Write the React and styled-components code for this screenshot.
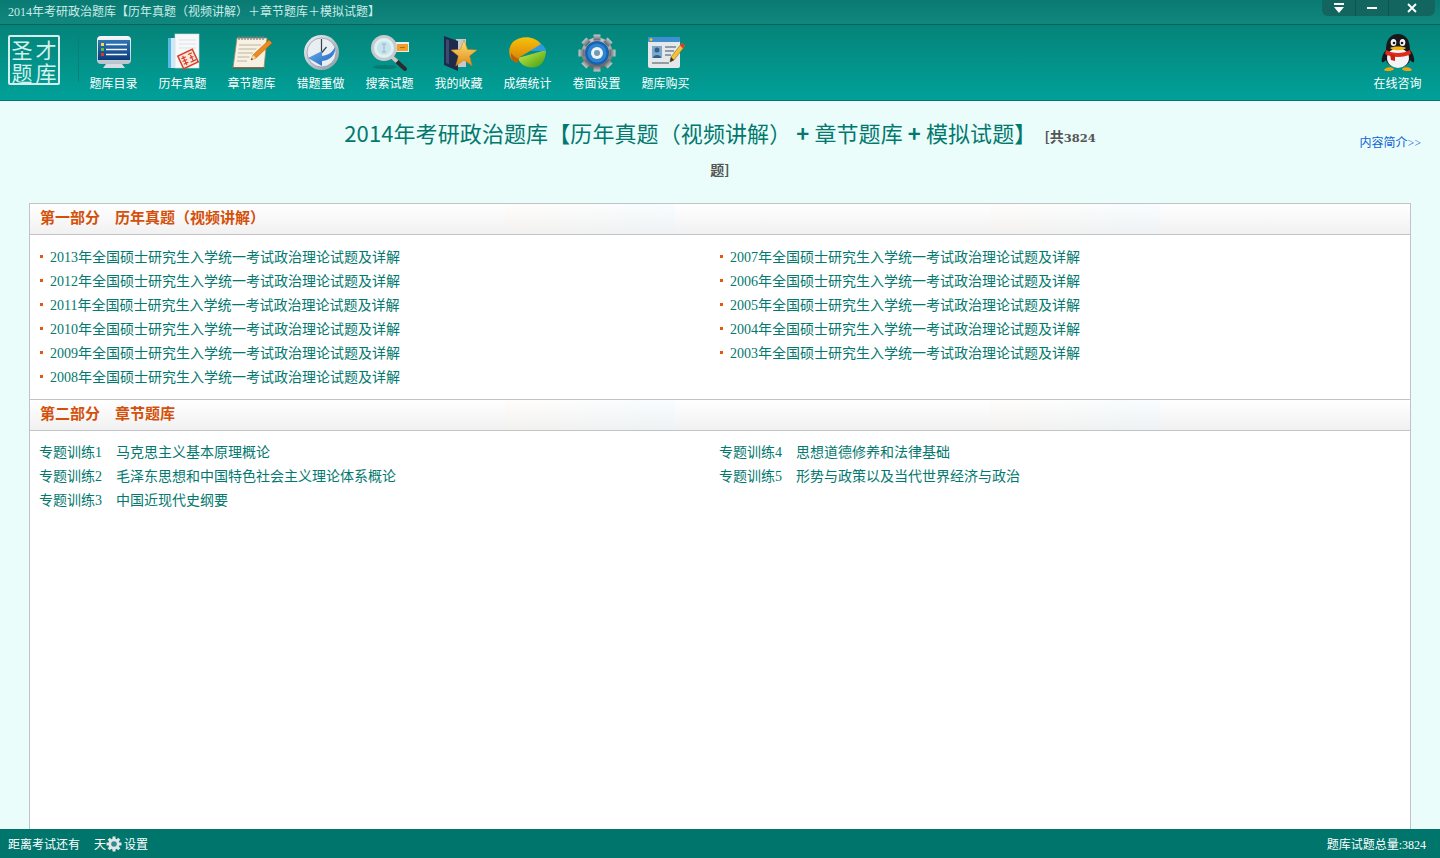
import React from 'react';
import styled, { createGlobalStyle } from 'styled-components';

const FONT = '"Liberation Serif", "Noto Sans CJK SC", sans-serif';

const GlobalStyle = createGlobalStyle`
  html, body {
    margin: 0;
    padding: 0;
    background: #ebfdfb;
    font-family: ${FONT};
  }
`;

const Page = styled.div`
  height: 100vh;
  display: flex;
  flex-direction: column;
  overflow: hidden;
`;

const TitleBar = styled.div`
  height: 24px;
  flex: none;
  display: flex;
  align-items: flex-start;
  justify-content: space-between;
  padding: 0 5px 0 8px;
  background: linear-gradient(#0a7a72, #10877e);
  border-bottom: 1px solid #05635c;
`;

const WindowTitle = styled.span`
  font-size: 12px;
  line-height: 24px;
  color: #c9ece8;
`;

const WindowControls = styled.div`
  display: flex;
  height: 16px;
  background: #12665f;
  border-radius: 0 0 6px 6px;
`;

const WindowButton = styled.button`
  width: ${(p) => p.$w}px;
  height: 16px;
  padding: 0;
  border: 0;
  border-left: ${(p) => (p.$first ? '0' : '1px solid #0c5650')};
  background: transparent;
  display: flex;
  align-items: center;
  justify-content: center;
`;

const Toolbar = styled.div`
  height: 75px;
  flex: none;
  display: flex;
  background: linear-gradient(#058379, #00a199);
  border-bottom: 1px solid #04776f;
`;

const Logo = styled.div`
  flex: none;
  width: 48px;
  height: 46px;
  margin: 10px 0 0 8px;
  border: 2px solid #d5f0ec;
  border-radius: 2px;
  display: grid;
  grid-template-columns: 1fr 1fr;
  grid-template-rows: 1fr 1fr;
  place-items: center;
  font-family: "Noto Sans CJK SC", sans-serif;
  font-size: 21px;
  color: #d5f0ec;
`;

const LogoChar = styled.span`
  display: block;
  height: 22px;
  line-height: 22px;
`;

const Separator = styled.div`
  flex: none;
  width: 1px;
  height: 46px;
  margin: 11px 0 0 18px;
  background: #068178;
`;

const ToolItem = styled.div`
  flex: none;
  width: 69px;
  display: flex;
  flex-direction: column;
  align-items: center;
  padding-top: 8px;
  margin-left: ${(p) => (p.$push ? 'auto' : '0')};
  margin-right: ${(p) => (p.$push ? '8px' : '0')};
  svg {
    display: block;
  }
`;

const ToolLabel = styled.span`
  font-family: "Noto Sans CJK SC", sans-serif;
  font-size: 12px;
  line-height: 20px;
  color: #fff;
  white-space: nowrap;
`;

const Main = styled.div`
  flex: 1;
  min-height: 0;
  display: flex;
  flex-direction: column;
  padding: 15px 29px 0;
`;

const Heading = styled.div`
  flex: none;
  display: grid;
  grid-template-columns: 311px 760px 1fr;
  margin-bottom: 21px;
`;

const HeadingText = styled.h1`
  grid-column: 2;
  margin: 0;
  text-align: center;
  font-family: "Noto Sans CJK SC", sans-serif;
  font-weight: 400;
  font-size: 22px;
  line-height: 33px;
  letter-spacing: 0.1px;
  color: #03786e;
`;

const Plus = styled.span`
  margin: 0 5px;
  font-weight: 700;
`;

const Total = styled.span`
  font-size: 14px;
  line-height: 14px;
  font-weight: 700;
  letter-spacing: 0;
  color: #555;
  margin-left: 8px;
`;

const TotalDigits = styled.span`
  font-family: "DejaVu Serif", serif;
  font-size: 11.5px;
`;

const IntroLink = styled.a`
  grid-column: 3;
  justify-self: end;
  margin: 17px -10px 0 0;
  font-size: 12px;
  line-height: 20px;
  color: #0b62d6;
`;

const Panel = styled.div`
  flex: 1;
  background: #fff;
  border: 1px solid #c0c4c6;
  border-bottom: 0;
`;

const SectionHeader = styled.h2`
  height: 30px;
  margin: 0;
  padding-left: 10px;
  font-size: 15px;
  font-weight: 700;
  line-height: 29px;
  color: #d4500a;
  background:
    linear-gradient(90deg, rgba(255, 242, 225, 0.12), rgba(225, 245, 255, 0.22)) 475px 0 / 170px 100% no-repeat,
    linear-gradient(90deg, rgba(255, 242, 225, 0.12), rgba(225, 245, 255, 0.22)) 960px 0 / 170px 100% no-repeat,
    linear-gradient(#fff, #f1f1f1);
  border-top: ${(p) => (p.$divided ? '1px solid #c0c4c6' : '0')};
  border-bottom: 1px solid #c0c4c6;
  white-space: pre;
`;

const Columns = styled.div`
  display: grid;
  grid-template-columns: 680px 680px;
  padding: ${(p) => (p.$tight ? '8px' : '9px')} 0 11px 10px;
`;

const Column = styled.ul`
  margin: 0;
  padding: 0;
  list-style: none;
`;

const PaperRow = styled.li`
  display: flex;
  align-items: center;
  height: 24px;
  font-size: 14px;
  color: #03786e;
  white-space: nowrap;
  &::before {
    content: '';
    width: 3px;
    height: 3px;
    margin-right: 7px;
    background: #e0590f;
  }
`;

const ChapterRow = styled.li`
  display: flex;
  align-items: center;
  gap: 14px;
  height: 24px;
  margin-left: -1px;
  font-size: 14px;
  color: #03786e;
  white-space: nowrap;
`;

const StatusBar = styled.div`
  height: 29px;
  flex: none;
  display: flex;
  align-items: center;
  padding: 0 14px 0 8px;
  background: #00756c;
  color: #fff;
  font-size: 12px;
`;

const StatusDays = styled.span`
  margin-left: 14px;
`;

const StatusSettings = styled.span`
  display: flex;
  align-items: center;
  gap: 2px;
`;

const StatusTotal = styled.span`
  margin-left: auto;
`;

const MonitorIcon = () => (
  <svg width="40" height="40" viewBox="0 0 40 40">
    <defs>
      <linearGradient id="mon-bezel" x1="0" y1="0" x2="0" y2="1">
        <stop offset="0" stopColor="#f6f8fa" />
        <stop offset="1" stopColor="#b9c3cc" />
      </linearGradient>
      <linearGradient id="mon-screen" x1="0" y1="0" x2="0" y2="1">
        <stop offset="0" stopColor="#2f76b6" />
        <stop offset="1" stopColor="#0b3b7c" />
      </linearGradient>
    </defs>
    <path d="M12 31h16l3 4H9z" fill="#d7dde2" />
    <rect x="3" y="3" width="34" height="28" rx="4" fill="url(#mon-bezel)" />
    <rect x="4" y="7" width="32" height="20" fill="url(#mon-screen)" />
    <rect x="7" y="10" width="3" height="3" fill="#e8e23a" />
    <rect x="7" y="15" width="3" height="3" fill="#57c43f" />
    <rect x="7" y="20" width="3" height="3" fill="#e0322b" />
    <path d="M12 11.500h21M12 16.500h21M12 21.500h21" stroke="#f2f6fa" strokeWidth="1.400" />
  </svg>
);

const PaperIcon = () => (
  <svg width="40" height="40" viewBox="0 0 40 40">
    <rect x="5" y="5" width="10" height="30" fill="#5ab8e6" />
    <rect x="8" y="5" width="4" height="30" fill="#cfeaf7" />
    <rect x="12" y="1" width="24" height="34" fill="#f6f8f9" stroke="#d6dadd" strokeWidth="0.600" />
    <path d="M16 7h17M16 11h17M16 15h17" stroke="#dfe3e6" />
    <g transform="rotate(-25 25 26)">
      <rect x="17" y="19" width="16" height="14" fill="#fbe6dd" stroke="#d8402a" strokeWidth="1.500" />
      <path d="M19 23h5M19 26h5M19 29h5M21.500 21v10M27 22h4M27 26h4M26 30h6M29 22v8" stroke="#d8402a" strokeWidth="1.200" />
    </g>
  </svg>
);

const NotepadIcon = () => (
  <svg width="40" height="40" viewBox="0 0 40 40">
    <path d="M5 5h30l-3 30H1z" fill="#f6f1e3" stroke="#9c8a66" strokeWidth="0.800" />
    <path d="M1 35h31" stroke="#6d5a3d" strokeWidth="1.600" />
    <path d="M7 3v4M10 3v4M13 3v4M16 3v4M19 3v4M22 3v4M25 3v4M28 3v4M31 3v4" stroke="#7d7d7d" strokeWidth="1.200" />
    <path d="M7 12h22M6.500 16h18M6 20h15M5.500 24h12M5 28h10" stroke="#bdb49e" />
    <path d="M37 7l3 3-16 15-5 2 2-5z" fill="#f18a1c" stroke="#b85f0c" strokeWidth="0.600" />
    <path d="M19 27l2-5 3 3z" fill="#f5dcb5" />
    <path d="M19 27l.800-2 1.200 1.200z" fill="#333" />
  </svg>
);

const ClockIcon = () => (
  <svg width="40" height="40" viewBox="0 0 40 40">
    <defs>
      <linearGradient id="clock-rim" x1="0" y1="0" x2="1" y2="1">
        <stop offset="0" stopColor="#f4f6f8" />
        <stop offset="1" stopColor="#8a96a2" />
      </linearGradient>
      <linearGradient id="clock-arrow" x1="0" y1="0" x2="1" y2="1">
        <stop offset="0" stopColor="#6fb4ea" />
        <stop offset="1" stopColor="#1a5fc0" />
      </linearGradient>
    </defs>
    <circle cx="20.500" cy="19.500" r="17.500" fill="url(#clock-rim)" />
    <circle cx="20.500" cy="19.500" r="14.500" fill="#e9eef3" stroke="#7c8894" strokeWidth="0.600" />
    <path d="M20.500 6v14l5-6" stroke="#38424c" strokeWidth="1.200" fill="none" />
    <path d="M34 14c1 7-4 13-13 14v5L7 25l14-7v5c6-1 10-3 13-9z" fill="url(#clock-arrow)" />
  </svg>
);

const SearchIcon = () => (
  <svg width="40" height="40" viewBox="0 0 40 40">
    <ellipse cx="15" cy="34" rx="12" ry="2" fill="#066d66" opacity="0.600" />
    <rect x="22" y="9" width="17" height="10" fill="#e8f0ee" />
    <rect x="27" y="11" width="11" height="7" fill="#f0a02a" />
    <path d="M30 14.500h5" stroke="#b76a10" />
    <path d="M22 24l13 12" stroke="#2b2b2b" strokeWidth="4" strokeLinecap="round" />
    <path d="M22 24l5 4.500" stroke="#c8c8c8" strokeWidth="4" />
    <circle cx="14" cy="15" r="11.500" fill="#dff1f5" stroke="#c7cbce" strokeWidth="3" />
    <circle cx="14" cy="15" r="7" fill="#c5e4ee" />
    <path d="M14 11v8M12 11h4M12 19h4" stroke="#9cb4bd" />
  </svg>
);

const FavoriteIcon = () => (
  <svg width="40" height="40" viewBox="0 0 40 40">
    <defs>
      <linearGradient id="fav-star" x1="0" y1="0" x2="0" y2="1">
        <stop offset="0" stopColor="#ffe27a" />
        <stop offset="1" stopColor="#e08a12" />
      </linearGradient>
    </defs>
    <path d="M17 6h10v28H17z" fill="#c6c8cc" />
    <path d="M5 3l14 5v30L5 32z" fill="#1d2a4a" />
    <path d="M7 6l3 1.200v24L7 30z" fill="#3b4a70" />
    <path d="M25 7l3.600 9.400 9.400.600-7.400 6 2.600 10L25 27l-8.200 6 2.600-10-7.400-6 9.400-.600z" fill="url(#fav-star)" stroke="#c97a10" strokeWidth="0.500" />
  </svg>
);

const PieIcon = () => (
  <svg width="40" height="40" viewBox="0 0 40 40">
    <defs>
      <linearGradient id="pie-top" x1="0" y1="0" x2="0" y2="1">
        <stop offset="0" stopColor="#f7c20a" />
        <stop offset="1" stopColor="#d77a06" />
      </linearGradient>
      <linearGradient id="pie-green" x1="0" y1="0" x2="1" y2="1">
        <stop offset="0" stopColor="#d2f24a" />
        <stop offset="1" stopColor="#3f9a12" />
      </linearGradient>
    </defs>
    <path d="M38 17L10 25c2 7 10 11 18 9 6-1 10-8 10-17z" fill="url(#pie-green)" />
    <path d="M22 18l10-8c3 2 6 5 6 8z" fill="#2a9be0" />
    <path d="M33 11C27 3 14 2 6 8 0 13 0 22 4 27l5 3 3-6 10-6z" fill="url(#pie-top)" />
    <path d="M4 27l5 3 2-4c-3-1-6-3-8-6 0 2 0 5 1 7z" fill="#b86205" />
  </svg>
);

const GearIcon = () => (
  <svg width="40" height="40" viewBox="0 0 40 40">
    <defs>
      <linearGradient id="gear-body" x1="0" y1="0" x2="0" y2="1">
        <stop offset="0" stopColor="#c9cbcc" />
        <stop offset="1" stopColor="#5f6264" />
      </linearGradient>
    </defs>
    <g fill="url(#gear-body)">
      <circle cx="20" cy="20" r="15.500" />
      {[0, 45, 90, 135, 180, 225, 270, 315].map((a) => (
        <rect key={a} x="16.500" y="1.500" width="7" height="6" transform={`rotate(${a} 20 20)`} />
      ))}
    </g>
    <circle cx="20" cy="20" r="12" fill="#1562b4" />
    <circle cx="20" cy="20" r="9.500" fill="#2f86d0" />
    <circle cx="20" cy="20" r="6" fill="#f0f4f6" />
    <circle cx="20" cy="20" r="3" fill="#6f9ab8" />
  </svg>
);

const BuyIcon = () => (
  <svg width="40" height="40" viewBox="0 0 40 40">
    <rect x="2" y="4" width="32" height="31" rx="2" fill="#e5e8ea" />
    <rect x="2" y="4" width="32" height="5" rx="1" fill="#3d8fd0" />
    <circle cx="5" cy="6.500" r="1.500" fill="#f0c12a" />
    <rect x="6" y="13" width="10" height="12" fill="#7ea8c8" />
    <circle cx="11" cy="17" r="2.500" fill="#2f5f8c" />
    <path d="M7 25c0-4 8-4 8 0z" fill="#2f5f8c" />
    <path d="M19 14h11M19 18h9M19 22h6M6 30h17" stroke="#75828c" strokeWidth="1.400" />
    <path d="M36 10l3 3-11 14-4 2 1-5z" fill="#f2c33a" stroke="#8a6a10" strokeWidth="0.600" />
    <path d="M36 10l3 3-2 2.500-3-3z" fill="#d8402a" />
    <path d="M24 29l1-5 3 3z" fill="#333" />
  </svg>
);

const PenguinIcon = () => (
  <svg width="40" height="40" viewBox="0 0 40 40">
    <path d="M8 17C8 6 13 1 20 1s12 5 12 16c3 3 5 9 4 12-1 1-3-1-4-2-1 4-5 7-12 7s-11-3-12-7c-1 1-3 3-4 2-1-3 1-9 4-12z" fill="#17171c" />
    <ellipse cx="20" cy="25" rx="11" ry="10" fill="#f4f4f6" />
    <path d="M8 17c7 4 17 4 24 0l1 4c-7 4-19 4-26 0z" fill="#e02a1d" />
    <path d="M12 21l5 1v6l-4-1z" fill="#c9200f" />
    <ellipse cx="15.500" cy="9.500" rx="2.800" ry="3.600" fill="#f4f4f6" />
    <ellipse cx="24.500" cy="9.500" rx="2.800" ry="3.600" fill="#f4f4f6" />
    <circle cx="16" cy="10" r="1.300" fill="#17171c" />
    <circle cx="24" cy="10" r="1.300" fill="#17171c" />
    <path d="M12 15c3-2 13-2 16 0-3 3-13 3-16 0z" fill="#f5b30f" />
    <path d="M6 37c1-3 8-4 10-1 0 2-9 3-10 1zM24 36c2-3 9-2 10 1-1 2-10 1-10-1z" fill="#f5a30f" />
  </svg>
);

const SmallGear = () => (
  <svg width="16" height="16" viewBox="0 0 16 16">
    <g fill="#e3e6e6">
      <circle cx="8" cy="8" r="5.500" />
      {[0, 45, 90, 135, 180, 225, 270, 315].map((a) => (
        <rect key={a} x="6.500" y="0.500" width="3" height="3" transform={`rotate(${a} 8 8)`} />
      ))}
    </g>
    <circle cx="8" cy="8" r="2.800" fill="#2c8f96" />
  </svg>
);

const tools = [
  ['题库目录', MonitorIcon],
  ['历年真题', PaperIcon],
  ['章节题库', NotepadIcon],
  ['错题重做', ClockIcon],
  ['搜索试题', SearchIcon],
  ['我的收藏', FavoriteIcon],
  ['成绩统计', PieIcon],
  ['卷面设置', GearIcon],
  ['题库购买', BuyIcon],
];

const paperName = (year) => `${year}年全国硕士研究生入学统一考试政治理论试题及详解`;
const papersLeft = [2013, 2012, 2011, 2010, 2009, 2008];
const papersRight = [2007, 2006, 2005, 2004, 2003];

const chaptersLeft = [
  ['专题训练1', '马克思主义基本原理概论'],
  ['专题训练2', '毛泽东思想和中国特色社会主义理论体系概论'],
  ['专题训练3', '中国近现代史纲要'],
];
const chaptersRight = [
  ['专题训练4', '思想道德修养和法律基础'],
  ['专题训练5', '形势与政策以及当代世界经济与政治'],
];

export default function App() {
  return (
    <Page>
      <GlobalStyle />
      <TitleBar>
        <WindowTitle>2014年考研政治题库【历年真题（视频讲解）＋章节题库＋模拟试题】</WindowTitle>
        <WindowControls>
          <WindowButton $first $w={33}>
            <svg width="12" height="12" viewBox="0 0 12 12">
              <path d="M1 1h10v2H1zM1 5h10L6 11z" fill="#fff" />
            </svg>
          </WindowButton>
          <WindowButton $w={33}>
            <svg width="12" height="12" viewBox="0 0 12 12">
              <path d="M1 5h10v2H1z" fill="#fff" />
            </svg>
          </WindowButton>
          <WindowButton $w={47}>
            <svg width="12" height="12" viewBox="0 0 12 12">
              <path d="M2 2l8 8M10 2l-8 8" stroke="#fff" strokeWidth="1.800" />
            </svg>
          </WindowButton>
        </WindowControls>
      </TitleBar>
      <Toolbar>
        <Logo>
          <LogoChar>圣</LogoChar>
          <LogoChar>才</LogoChar>
          <LogoChar>题</LogoChar>
          <LogoChar>库</LogoChar>
        </Logo>
        <Separator />
        {tools.map(([label, Icon]) => (
          <ToolItem key={label}>
            <Icon />
            <ToolLabel>{label}</ToolLabel>
          </ToolItem>
        ))}
        <ToolItem $push>
          <PenguinIcon />
          <ToolLabel>在线咨询</ToolLabel>
        </ToolItem>
      </Toolbar>
      <Main>
        <Heading>
          <HeadingText>
            2014年考研政治题库【历年真题（视频讲解）<Plus>+</Plus>章节题库<Plus>+</Plus>模拟试题】
            <Total>
              [共<TotalDigits>3824</TotalDigits>
              <br />
              题]
            </Total>
          </HeadingText>
          <IntroLink>内容简介&gt;&gt;</IntroLink>
        </Heading>
        <Panel>
          <SectionHeader>{'第一部分　历年真题（视频讲解）'}</SectionHeader>
          <Columns>
            <Column>
              {papersLeft.map((y) => (
                <PaperRow key={y}>{paperName(y)}</PaperRow>
              ))}
            </Column>
            <Column>
              {papersRight.map((y) => (
                <PaperRow key={y}>{paperName(y)}</PaperRow>
              ))}
            </Column>
          </Columns>
          <SectionHeader $divided>{'第二部分　章节题库'}</SectionHeader>
          <Columns $tight>
            <Column>
              {chaptersLeft.map(([tag, name]) => (
                <ChapterRow key={tag}>
                  <span>{tag}</span>
                  <span>{name}</span>
                </ChapterRow>
              ))}
            </Column>
            <Column>
              {chaptersRight.map(([tag, name]) => (
                <ChapterRow key={tag}>
                  <span>{tag}</span>
                  <span>{name}</span>
                </ChapterRow>
              ))}
            </Column>
          </Columns>
        </Panel>
      </Main>
      <StatusBar>
        距离考试还有
        <StatusDays>天</StatusDays>
        <StatusSettings>
          <SmallGear />
          设置
        </StatusSettings>
        <StatusTotal>题库试题总量:3824</StatusTotal>
      </StatusBar>
    </Page>
  );
}
